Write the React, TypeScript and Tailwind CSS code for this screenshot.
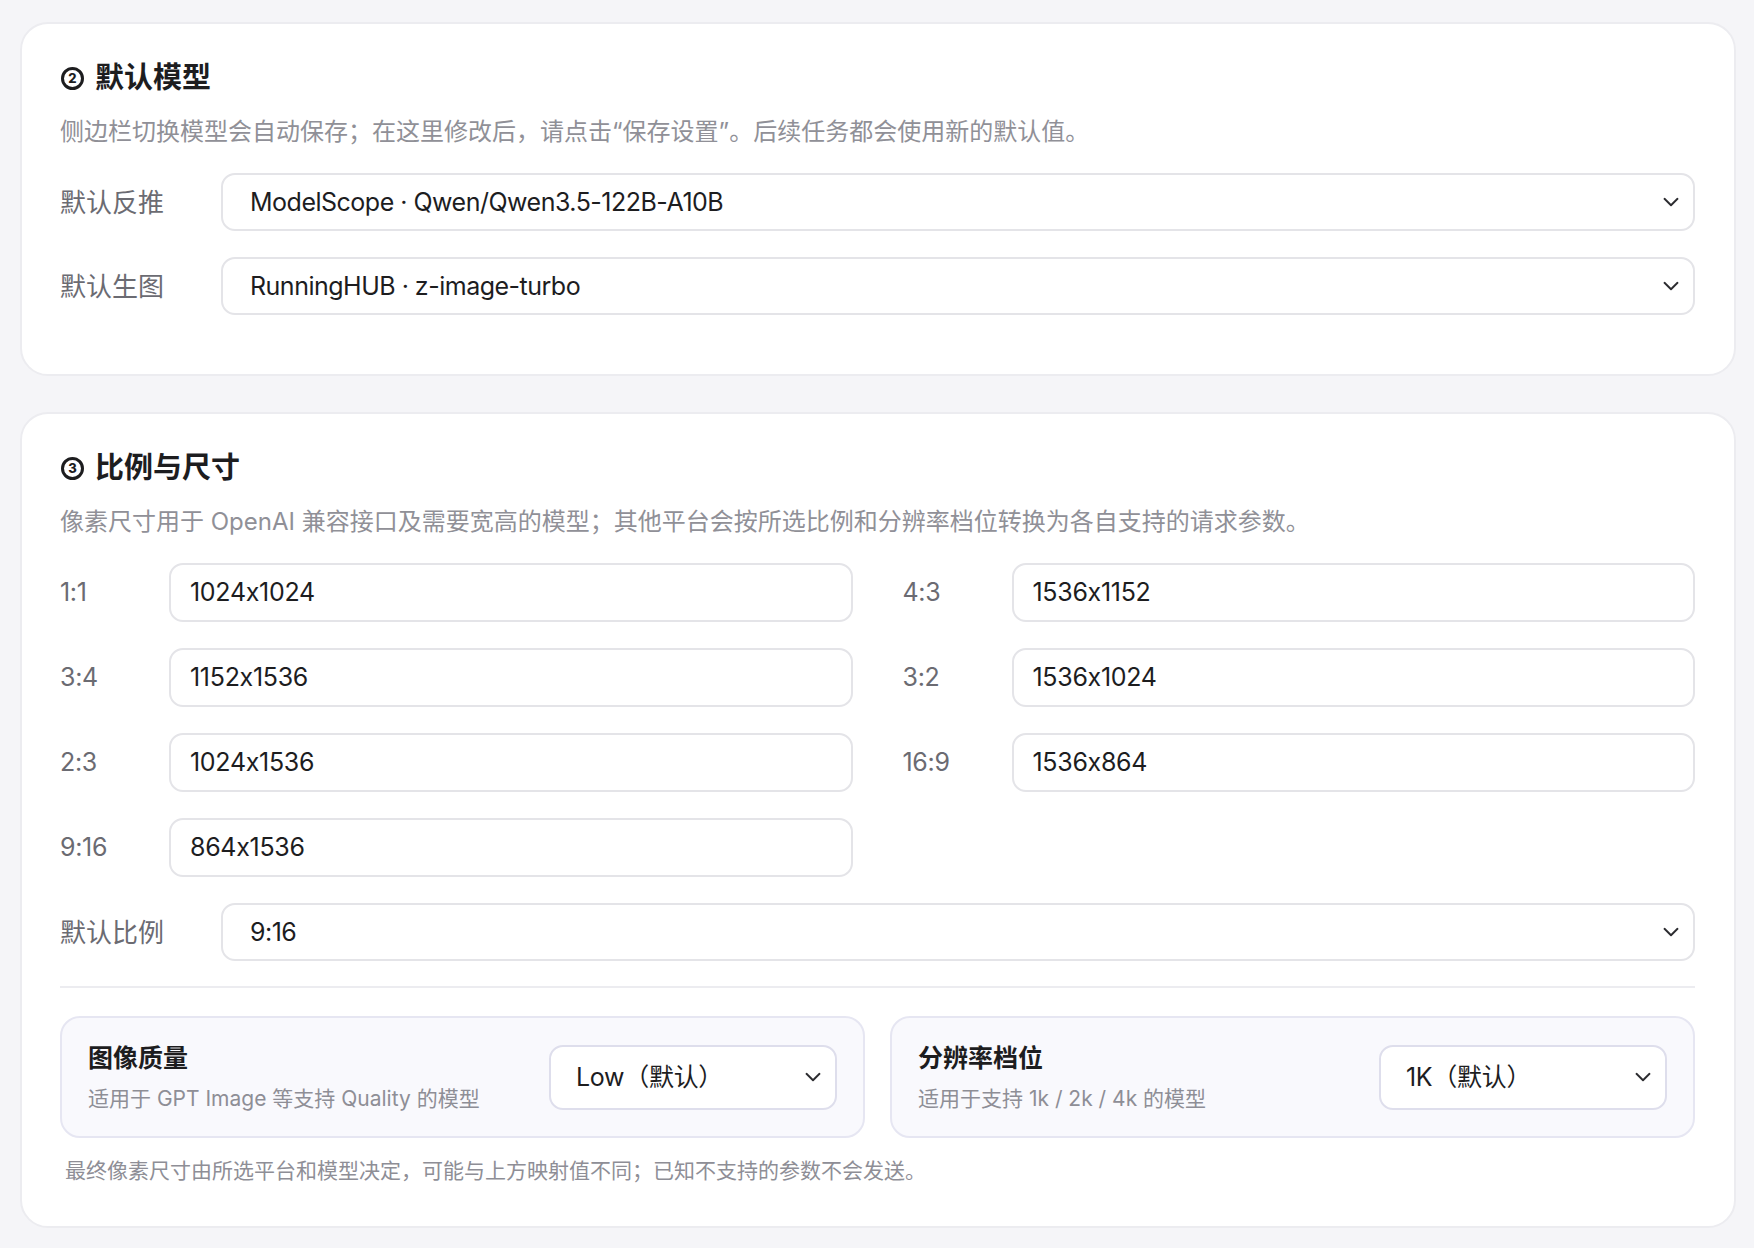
import React from "react";

const FONT = "font-['Inter','Noto_Sans_CJK_SC',sans-serif] [font-feature-settings:'calt'_0]";

function Chevron({ className = "" }: { className?: string }) {
  return (
    <svg
      className={className}
      width="16"
      height="10"
      viewBox="0 0 16 10"
      fill="none"
      stroke="#2c2c30"
      strokeWidth="1.9"
      strokeLinecap="round"
      strokeLinejoin="round"
    >
      <path d="M1.5 1.8 L8 8.2 L14.5 1.8" />
    </svg>
  );
}

function SelectBox({ value }: { value: string }) {
  return (
    <div className="flex h-[58px] flex-1 items-center justify-between rounded-[14px] border-2 border-[#e4e4e8] bg-white pl-[27px] pr-[14px]">
      <span className="text-[25px] leading-none tracking-[-0.5px] text-[#1d1d1f]">{value}</span>
      <Chevron />
    </div>
  );
}

function SelectRow({ label, value }: { label: string; value: string }) {
  return (
    <div className="flex items-center">
      <div className="w-[161px] shrink-0 text-[26px] text-[#6b6b72]">{label}</div>
      <SelectBox value={value} />
    </div>
  );
}

function SizeField({ ratio, value }: { ratio: string; value: string }) {
  return (
    <div className="flex items-center">
      <div className="w-[109px] shrink-0 text-[25px] tracking-[-0.3px] text-[#6b6b72]">{ratio}</div>
      <div className="flex h-[59px] flex-1 items-center rounded-[14px] border-2 border-[#e4e4e8] bg-white pl-[19px]">
        <span className="text-[25px] leading-none tracking-[-0.3px] text-[#1d1d1f]">{value}</span>
      </div>
    </div>
  );
}

function Heading({ num, title }: { num: string; title: string }) {
  return (
    <div className="flex h-[36px] items-center gap-[11px] text-[29px] font-bold leading-[36px] text-[#1d1d1f]">
      <span className="ml-[1px] flex h-[23px] w-[23px] items-center justify-center rounded-full border-[3px] border-[#1d1d1f] text-[13px] font-extrabold leading-none">
        {num}
      </span>
      <span>{title}</span>
    </div>
  );
}

function SubCard({ title, sub, value }: { title: string; sub: string; value: string }) {
  return (
    <div className="flex h-[122px] items-center justify-between rounded-[20px] border-2 border-[#e6e6f2] bg-[#f9f9fd] px-[26px]">
      <div className="flex flex-col gap-[10px]">
        <div className="text-[25px] font-bold leading-[34px] text-[#1d1d1f]">{title}</div>
        <div className="text-[21px] leading-[28px] text-[#8e8e96]">{sub}</div>
      </div>
      <div className="flex h-[65px] w-[288px] items-center justify-between rounded-[14px] border-2 border-[#dedeec] bg-white pl-[25px] pr-[14px]">
        <span className="text-[25px] leading-none tracking-[-0.3px] text-[#1d1d1f]">{value}</span>
        <Chevron />
      </div>
    </div>
  );
}

export default function App() {
  return (
    <div className={`${FONT} min-h-[1248px] w-full bg-[#f5f5f8] pb-[22px] pl-[20px] pr-[18px] pt-[22px]`}>
      {/* Card 1 */}
      <div className="rounded-[28px] border-2 border-[#ececf0] bg-white pb-[59px] pl-[38px] pr-[39px] pt-[36px]">
        <Heading num="2" title="默认模型" />
        <p className="mt-[20px] text-[24px] leading-[32px] text-[#909097]">
          侧边栏切换模型会自动保存；在这里修改后，请点击“保存设置”。后续任务都会使用新的默认值。
        </p>
        <div className="mt-[25px] flex flex-col gap-[26px]">
          <SelectRow label="默认反推" value="ModelScope · Qwen/Qwen3.5-122B-A10B" />
          <SelectRow label="默认生图" value="RunningHUB · z-image-turbo" />
        </div>
      </div>

      {/* Card 2 */}
      <div className="mt-[36px] rounded-[28px] border-2 border-[#ececf0] bg-white pb-[41px] pl-[38px] pr-[39px] pt-[36px]">
        <Heading num="3" title="比例与尺寸" />
        <p className="mt-[20px] text-[24px] leading-[32px] text-[#909097]">
          像素尺寸用于 OpenAI 兼容接口及需要宽高的模型；其他平台会按所选比例和分辨率档位转换为各自支持的请求参数。
        </p>
        <div className="mt-[25px] grid grid-cols-2 gap-x-[50px] gap-y-[26px]">
          <SizeField ratio="1:1" value="1024x1024" />
          <SizeField ratio="4:3" value="1536x1152" />
          <SizeField ratio="3:4" value="1152x1536" />
          <SizeField ratio="3:2" value="1536x1024" />
          <SizeField ratio="2:3" value="1024x1536" />
          <SizeField ratio="16:9" value="1536x864" />
          <SizeField ratio="9:16" value="864x1536" />
        </div>
        <div className="mt-[26px]">
          <SelectRow label="默认比例" value="9:16" />
        </div>
        <div className="mt-[25px] h-[2px] bg-[#ececf0]" />
        <div className="mt-[28px] grid grid-cols-2 gap-[25px]">
          <SubCard title="图像质量" sub="适用于 GPT Image 等支持 Quality 的模型" value="Low（默认）" />
          <SubCard title="分辨率档位" sub="适用于支持 1k / 2k / 4k 的模型" value="1K（默认）" />
        </div>
        <p className="mt-[19px] pl-[5px] text-[21px] leading-[28px] text-[#8e8e96]">
          最终像素尺寸由所选平台和模型决定，可能与上方映射值不同；已知不支持的参数不会发送。
        </p>
      </div>
    </div>
  );
}
